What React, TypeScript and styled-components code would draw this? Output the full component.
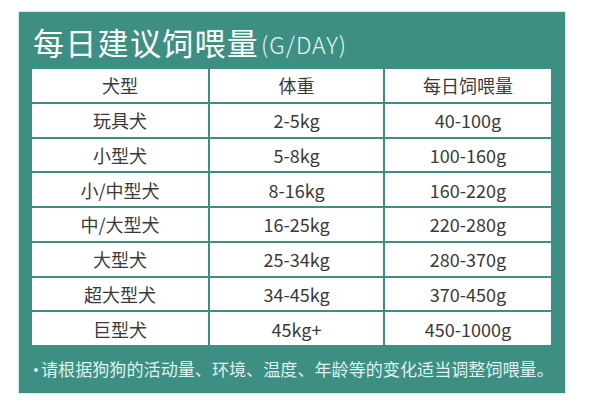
import React from "react";
import styled, { createGlobalStyle } from "styled-components";

const GlobalStyle = createGlobalStyle`
  body {
    margin: 0;
    background: #ffffff;
    font-family: "Noto Sans CJK SC", "Noto Sans", sans-serif;
  }
`;

const Page = styled.div`
  width: 600px;
  height: 404px;
  padding: 12px 0 0 19px;
  box-sizing: border-box;
`;

const Panel = styled.div`
  width: 546px;
  height: 381px;
  background: #3e8f83;
  box-shadow: 0 0 0 1px #cfeeea;
  padding: 0 14px 0 13px;
  box-sizing: border-box;
  display: flex;
  flex-direction: column;
`;

const Title = styled.h1`
  margin: 0;
  height: 57px;
  display: flex;
  align-items: center;
  padding: 1px 0 0 1px;
  box-sizing: border-box;
  color: #ffffff;
  font-size: 31px;
  font-weight: 400;
  letter-spacing: 1.3px;
  white-space: nowrap;
`;

const Unit = styled.span`
  font-size: 23px;
  font-weight: 300;
  color: #e6f4f1;
  letter-spacing: 1px;
  margin-left: 2px;
  margin-top: 5px;
`;

const Grid = styled.div`
  display: grid;
  grid-template-columns: 176px 173px 1fr;
  grid-auto-rows: 1fr;
  gap: 2px;
  height: 276px;
  background: #3e8f83;
`;

const Cell = styled.div`
  background: #ffffff;
  display: flex;
  align-items: center;
  justify-content: center;
  color: #3a3a3a;
  font-size: 18px;
  font-weight: 400;
  line-height: 1;
`;

const Note = styled.p`
  margin: 0;
  flex: 1;
  display: flex;
  align-items: center;
  padding: 0 0 1px 2px;
  color: #dff1ed;
  font-size: 17.1px;
  white-space: nowrap;
`;

const Dot = styled.span`
  width: 4px;
  height: 4px;
  border-radius: 50%;
  background: #dff1ed;
  margin: 2px 3px 0 0;
  flex-shrink: 0;
`;

const rows = [
  ["犬型", "体重", "每日饲喂量"],
  ["玩具犬", "2-5kg", "40-100g"],
  ["小型犬", "5-8kg", "100-160g"],
  ["小/中型犬", "8-16kg", "160-220g"],
  ["中/大型犬", "16-25kg", "220-280g"],
  ["大型犬", "25-34kg", "280-370g"],
  ["超大型犬", "34-45kg", "370-450g"],
  ["巨型犬", "45kg+", "450-1000g"],
];

export default function App() {
  return (
    <>
      <GlobalStyle />
      <Page>
        <Panel>
          <Title>
            每日建议饲喂量<Unit>(G/DAY)</Unit>
          </Title>
          <Grid>
            {rows.map((row, i) =>
              row.map((text, j) => <Cell key={`${i}-${j}`}>{text}</Cell>)
            )}
          </Grid>
          <Note>
            <Dot />
            请根据狗狗的活动量、环境、温度、年龄等的变化适当调整饲喂量。
          </Note>
        </Panel>
      </Page>
    </>
  );
}
